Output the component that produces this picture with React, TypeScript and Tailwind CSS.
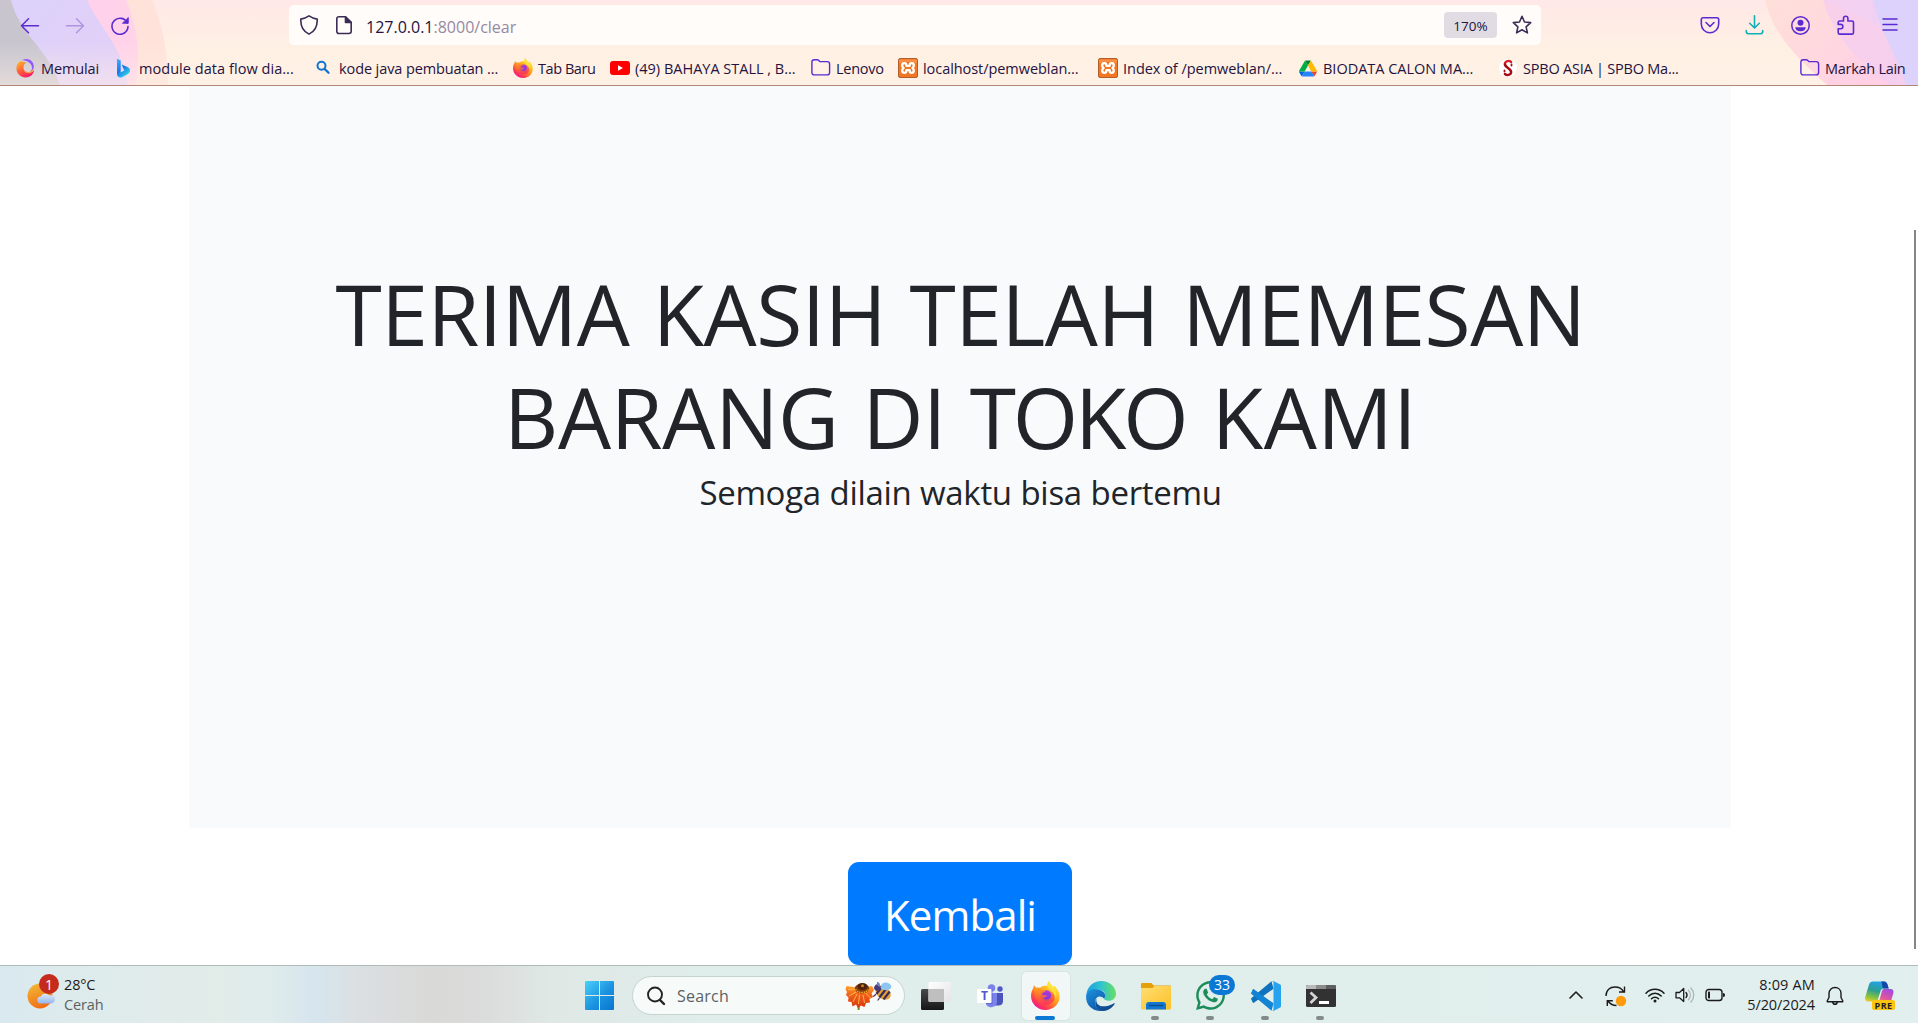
import React from 'react'
import type { ReactNode } from 'react'
import { FaWhatsapp } from 'react-icons/fa'

function FirefoxLogo({ id, className }: { id: string; className: string }) {
  return (
    <svg viewBox="0 0 28 28" className={className}>
      <defs>
        <linearGradient id={id + 'a'} x1="0.85" y1="0.05" x2="0.2" y2="0.95">
          <stop offset="0" stopColor="#fff44f" />
          <stop offset="0.3" stopColor="#ffc128" />
          <stop offset="0.55" stopColor="#ff8a1f" />
          <stop offset="0.8" stopColor="#ff3d4f" />
          <stop offset="1" stopColor="#f0129a" />
        </linearGradient>
        <linearGradient id={id + 'b'} x1="0.8" y1="0" x2="0.3" y2="1">
          <stop offset="0" stopColor="#b833e1" />
          <stop offset="1" stopColor="#6a3be0" />
        </linearGradient>
        <linearGradient id={id + 'c'} x1="0.3" y1="0" x2="0.5" y2="1">
          <stop offset="0" stopColor="#ff9a22" />
          <stop offset="0.5" stopColor="#ff6a30" />
          <stop offset="1" stopColor="#ff2f62" />
        </linearGradient>
      </defs>
      <path
        d="M17.5 0c.5 2.6 2.3 4.200 4.200 6.300.3-.7.4-1.300.3-2 3.300 2.500 5.700 6.500 5.700 11C27.700 22.300 21.600 28 14 28 6.200 28 0 22 0 14.500 0 10.800 1.200 8.600 2.300 6.800c.1-1 .2-1.800.6-2.600.6 1 1.300 1.700 2.200 2.200 1.200-.3 2.400-.2 3.700.2C10 5.200 11.300 4.600 13 4.500c1-.1 2 0 2.900.3-.2-1.700.2-3.400 1.600-4.800z"
        fill={`url(#${id}a)`}
      />
      <circle cx="14.700" cy="14.600" r="5.600" fill={`url(#${id}b)`} />
      <path
        d="M3 7.500c2.500-1.200 5-.6 6.700 1l4.800.9c-.4 1.200-2 1.700-3.300 2.100-.5.800-.3 1.500.2 2.200 1.800-.8 3.600.2 4.800.9-1.500.2-2.400 1.900-4.700 1.700 1.800 2.300 5.700 2.200 7.400-.3 1.300-2.200.5-4.700-1.300-6 4 .5 6 4.200 4.900 7.700-1.200 4-5.200 6-9.400 5.200C7.700 22 4 17.800 3.700 12.500z"
        fill={`url(#${id}c)`}
        fillOpacity="0.85"
      />
      <path d="M17.500 0c.5 2.600 2.300 4.200 4.200 6.300 2.600 3 3.400 7 2 10.600-.6-5.600-5-8-7.400-11.100C15.300 4 15.800 1.700 17.500 0z" fill="#ffe13a" />
    </svg>
  )
}

function MemulaiLogo() {
  return (
    <svg viewBox="0 0 20 20" className="size-[20px]">
      <defs>
        <linearGradient id="mem" x1="0.1" y1="0.1" x2="0.7" y2="1">
          <stop offset="0" stopColor="#ffb02e" />
          <stop offset="0.5" stopColor="#ff5a3c" />
          <stop offset="1" stopColor="#f5156c" />
        </linearGradient>
      </defs>
      <path d="M4.500 3C1.500 4.800.2 7.500.4 11c.4 5 4.500 8.600 9.300 8.500 4.800-.1 8.300-3.600 8.300-7.500-1.300 2.200-3.800 3.200-6.300 2.500C8.300 13.600 7 11 7.500 8.500 7.800 6.600 9 5.200 10.500 4.500 8.500 4 6 4 4.500 3z" fill="url(#mem)" />
      <path d="M6 2.200C11-.7 17.500 2 17.800 8.500c.1 2.500-1.500 5-4 5.200 2.300-1.200 2.700-4 1.700-6.200C14 4 10 2.200 6 2.200z" fill="#9059ff" />
      <path d="M17.900 9c.3 4.200-3 6.800-6.200 6.300-2.300-.3-4-1.800-4.400-4 1.300 2 3.500 3 5.700 2.600 2.500-.4 4.300-2.300 4.900-4.900z" fill="#ff9b45" />
    </svg>
  )
}

function BingLogo() {
  return (
    <svg viewBox="0 0 20 20" className="size-[20px]">
      <defs>
        <linearGradient id="bing" x1="0" y1="0" x2="0.6" y2="1">
          <stop offset="0" stopColor="#35b6ff" />
          <stop offset="0.55" stopColor="#1b78e8" />
          <stop offset="1" stopColor="#2cd6e8" />
        </linearGradient>
      </defs>
      <path d="M3 .8l3.700 1.600v12.200l3.600-2L8.500 8.800 7.800 6.500l5.700 2.600c1.700.8 2.500 2 2.500 3.600 0 1.400-.8 2.500-2 3.200L8 19.200c-2.600 1-5-.5-5-3.200z" fill="url(#bing)" />
    </svg>
  )
}

const SearchMark = () => (
  <svg viewBox="0 0 20 20" className="size-[20px]" fill="none" stroke="#1273cf" strokeLinecap="round">
    <circle cx="7.500" cy="7.800" r="4" strokeWidth="2" />
    <path d="M10.700 11l3.800 3.800" strokeWidth="2.300" />
  </svg>
)

const YoutubeLogo = () => (
  <svg viewBox="0 0 20 20" className="size-[20px]">
    <rect x="0" y="3" width="20" height="14" rx="3" fill="#f00" />
    <path d="M8 7.200l5 2.800-5 2.800z" fill="#fff" />
  </svg>
)

const FolderOutline = () => (
  <svg viewBox="0 0 20 20" className="size-[20px]" fill="none" stroke="#5b2bd2" strokeWidth="1.400" strokeLinejoin="round">
    <path d="M.9 4.200c0-1.400.9-2.400 2.300-2.400h3c.7 0 1.200.3 1.600.7l1 1.100h7.400c1.400 0 2.400 1 2.400 2.300v8.600c0 1.400-1 2.400-2.400 2.400h-13C1.800 16.900.9 15.900.9 14.500z" />
  </svg>
)

const XamppLogo = () => (
  <svg viewBox="0 0 20 20" className="size-[20px]">
    <rect x="0.500" y="0.500" width="19" height="19" rx="1.500" fill="#f37623" stroke="#b0602c" />
    <path d="M1 1.500h18V5C13 3.500 7 3.500 1 5z" fill="#ffa25c" fillOpacity="0.55" />
    <path
      d="M8.300 7c0-1.200-.8-1.800-2-1.800-1.300 0-2.100.8-2.100 2.200 0 1.200.5 1.900 1.400 2.600-1 .7-1.400 1.500-1.400 2.600 0 1.400.8 2.200 2.100 2.200 1.200 0 2-.6 2-1.800v-.8h3.400v.8c0 1.200.8 1.800 2 1.800 1.300 0 2.100-.8 2.100-2.200 0-1.100-.4-1.900-1.400-2.600 1-.7 1.400-1.400 1.400-2.600 0-1.400-.8-2.200-2.100-2.200-1.200 0-2 .6-2 1.800v.8H8.300z"
      fill="none"
      stroke="#fff"
      strokeWidth="2.300"
      strokeLinejoin="round"
    />
  </svg>
)

const DriveLogo = () => (
  <svg viewBox="0 0 87.3 78" className="h-[17px] w-[18px]">
    <path d="M6.600 66.850l3.850 6.650c.8 1.400 1.950 2.500 3.300 3.300l13.750-23.800H0c0 1.550.4 3.100 1.200 4.500z" fill="#0066da" />
    <path d="M43.650 25L29.900 1.200c-1.350.8-2.500 1.900-3.300 3.300l-25.400 44a9.060 9.060 0 00-1.200 4.500h27.500z" fill="#00ac47" />
    <path d="M73.550 76.800c1.350-.8 2.500-1.900 3.300-3.300l1.600-2.750 7.650-13.250c.8-1.400 1.200-2.950 1.200-4.500H59.800l5.850 11.500z" fill="#ea4335" />
    <path d="M43.650 25L57.400 1.200C56.050.4 54.500 0 52.900 0H34.400c-1.600 0-3.150.45-4.500 1.200z" fill="#00832d" />
    <path d="M59.800 53H27.500L13.750 76.800c1.350.8 2.900 1.200 4.500 1.200h50.800c1.600 0 3.150-.45 4.500-1.200z" fill="#2684fc" />
    <path d="M73.400 26.500l-12.700-22c-.8-1.400-1.950-2.500-3.300-3.300L43.650 25 59.800 53h27.450c0-1.550-.4-3.100-1.200-4.500z" fill="#ffba00" />
  </svg>
)

const SpboLogo = () => (
  <svg viewBox="0 0 20 20" className="size-[20px]">
    <circle cx="10" cy="10" r="9" fill="#fff" />
    <g fill="none" strokeLinecap="round" strokeWidth="2.300">
      <path d="M13.200 4C10 1.500 6 4 7 7c.8 2.200 5.500 3.500 6 6.500" stroke="#d4202a" />
      <path d="M6.800 16c3.200 2.500 7.200 0 6.200-3-.8-2.200-5.500-3.500-6-6.500" stroke="#a50d14" />
      <path d="M6.500 12.500v1M13.500 6.500v1" stroke="#a50d14" strokeWidth="1.800" />
    </g>
  </svg>
)

type Mark = { icon: ReactNode; text: string; box: string; track: string }

const bookmarks: Mark[] = [
  { icon: <MemulaiLogo />, text: 'Memulai', box: 'w-[98px]', track: 'tracking-[-0.12px]' },
  { icon: <BingLogo />, text: 'module data flow dia...', box: 'w-[200px]', track: 'tracking-[0.05px]' },
  { icon: <SearchMark />, text: 'kode java pembuatan ...', box: 'w-[199px]', track: 'tracking-[-0.1px]' },
  { icon: <FirefoxLogo id="fs" className="size-[20px]" />, text: 'Tab Baru', box: 'w-[97px]', track: 'tracking-[-0.45px]' },
  { icon: <YoutubeLogo />, text: '(49) BAHAYA STALL , B...', box: 'w-[201px]', track: 'tracking-[0px]' },
  { icon: <FolderOutline />, text: 'Lenovo', box: 'w-[87px]', track: 'tracking-[-0.25px]' },
  { icon: <XamppLogo />, text: 'localhost/pemweblan...', box: 'w-[200px]', track: 'tracking-[-0.06px]' },
  { icon: <XamppLogo />, text: 'Index of /pemweblan/...', box: 'w-[200px]', track: 'tracking-[-0.03px]' },
  { icon: <DriveLogo />, text: 'BIODATA CALON MA...', box: 'w-[200px]', track: 'tracking-[-0.02px]' },
  { icon: <SpboLogo />, text: 'SPBO ASIA | SPBO Ma...', box: 'w-[200px]', track: 'tracking-[-0.22px]' },
]

function Bookmark({ icon, text, box, track }: Mark) {
  return (
    <div className={`flex shrink-0 items-center gap-[5px] ${box}`}>
      <span className="flex size-[20px] shrink-0 items-center justify-center">{icon}</span>
      <span className={`whitespace-pre pt-px text-[14.5px] leading-5 ${track}`}>{text}</span>
    </div>
  )
}

function ThemeArt() {
  return (
    <svg viewBox="0 0 1918 85" className="absolute inset-0 h-[85px] w-full" preserveAspectRatio="none">
      <defs>
        <linearGradient id="peach" x1="0" y1="0" x2="0" y2="1">
          <stop offset="0" stopColor="#ffe8e7" />
          <stop offset="0.55" stopColor="#fff0e4" />
          <stop offset="1" stopColor="#fff1e5" />
        </linearGradient>
        <linearGradient id="lav" x1="0" y1="0" x2="1" y2="0.5">
          <stop offset="0" stopColor="#dcd3fa" />
          <stop offset="1" stopColor="#e2cff8" />
        </linearGradient>
        <linearGradient id="pinkL" x1="0" y1="0" x2="1" y2="0">
          <stop offset="0" stopColor="#ffccf3" />
          <stop offset="1" stopColor="#ffd3e8" />
        </linearGradient>
        <linearGradient id="pinkR" x1="0" y1="0" x2="1" y2="0.4">
          <stop offset="0" stopColor="#ffe0d8" />
          <stop offset="1" stopColor="#ffd0e6" />
        </linearGradient>
        <linearGradient id="violR" x1="0" y1="0" x2="1" y2="0.3">
          <stop offset="0" stopColor="#f6d1ee" />
          <stop offset="1" stopColor="#ecd0f6" />
        </linearGradient>
        <linearGradient id="fade" x1="0" y1="0" x2="0" y2="1">
          <stop offset="0.5" stopColor="#fff1e5" stopOpacity="0" />
          <stop offset="1" stopColor="#fff1e5" stopOpacity="0.5" />
        </linearGradient>
      </defs>
      <rect width="1918" height="85" fill="url(#peach)" />
      <path d="M0 0H152C163 25 168 55 168 85H0z" fill="#ffe3da" />
      <path d="M0 0H126C137 25 141 58 136 85H0z" fill="url(#pinkL)" />
      <path d="M0 0H87C99 27 122 45 128 85H0z" fill="url(#lav)" />
      <path d="M0 0H11C18 32 50 52 60 85H0z" fill="#c8c5cf" />
      <rect width="180" height="85" fill="url(#fade)" />
      <path d="M1765 0C1773 36 1800 60 1827 85H1918V0z" fill="url(#pinkR)" />
      <path d="M1823 0C1835 40 1862 65 1890 85H1918V0z" fill="url(#violR)" />
      <path d="M1873 0C1880 30 1897 58 1906 85H1918V0z" fill="#ddd2fb" />
      <path d="M1823 0C1832 24 1843 38 1856 54 1840 60 1830 70 1827 85H1906C1901 68 1888 40 1880 26z" fill="#ffcfe4" fillOpacity="0.45" />
    </svg>
  )
}

const ink = 'size-[20px] shrink-0'

function Browser() {
  return (
    <header className="relative h-[86px] shrink-0 overflow-hidden border-b border-[#b08774] text-[#24123f]">
      <ThemeArt />
      <div className="relative flex h-[50px] items-center">
        <div className="flex w-[289px] items-center gap-[25px] pl-5">
          <svg viewBox="0 0 20 20" className={ink} fill="none" stroke="#5b2bd2" strokeWidth="1.500" strokeLinecap="round" strokeLinejoin="round">
            <path d="M18.500 10.700H1.500M8.500 3.700l-7 7 7 7" />
          </svg>
          <svg viewBox="0 0 20 20" className={ink} fill="none" stroke="#b193e0" strokeWidth="1.500" strokeLinecap="round" strokeLinejoin="round">
            <path d="M1.500 10.700h17M11.500 3.700l7 7-7 7" />
          </svg>
          <svg viewBox="0 0 20 20" className={ink} fill="none" stroke="#5b2bd2" strokeWidth="1.600" strokeLinecap="round">
            <path d="M17.300 8A8 8 0 1018 11.500" />
            <path d="M18.300 2.800v5.500h-5.600z" fill="#5b2bd2" strokeWidth="0.800" strokeLinejoin="round" />
          </svg>
        </div>
        <div className="flex h-10 w-[1252px] items-center rounded-[5px] bg-[#fffcfa] pl-[10px] pr-[9px]">
          <svg viewBox="0 0 20 20" className={ink} fill="none" stroke="#3c2c55" strokeWidth="1.600" strokeLinejoin="round">
            <path d="M10 .9c2.500 1.700 5 2.700 8.200 3.200.3 7-2.200 12.200-8.200 15C4 16.300 1.500 11.100 1.800 4.100 5 3.600 7.500 2.600 10 .9z" />
          </svg>
          <svg viewBox="0 0 20 20" className="ml-[15px] size-[20px] shrink-0" fill="none" stroke="#3c2c55" strokeWidth="1.600" strokeLinejoin="round">
            <path d="M5 1.800h6.500l5.700 5.500v9c0 1.200-.8 2.200-2.200 2.200H5c-1.400 0-2.200-1-2.200-2.200V4c0-1.300.9-2.200 2.200-2.200z" />
            <path d="M11.500 2v5.400H17z" fill="#3c2c55" />
          </svg>
          <span className="ml-[12px] flex-1 pt-[3px] text-base leading-6 text-[#958aa3]">
            <span className="text-[#24123f]">127.0.0.1</span>:8000/clear
          </span>
          <span className="flex h-[26px] w-[53px] items-center justify-center rounded-[4px] bg-[#e1dce3] pt-[2px] text-[13.5px] tracking-[0.1px]">170%</span>
          <svg viewBox="0 0 20 20" className="ml-[15px] size-[20px] shrink-0" fill="none" stroke="#3c2c55" strokeWidth="1.600" strokeLinejoin="round">
            <path d="M10 1.300l2.500 5.700 6.200.6-4.600 4.200 1.300 6.100L10 14.800l-5.400 3.100 1.300-6.100L1.300 7.600l6.200-.6z" />
          </svg>
        </div>
        <div className="ml-[159px] flex items-center gap-[25px]">
          <svg viewBox="0 0 20 20" className={ink} fill="none" stroke="#5b2bd2" strokeWidth="1.600" strokeLinecap="round" strokeLinejoin="round">
            <path d="M3 2.800h14c1 0 1.700.7 1.700 1.700v4.500c0 5-4 8.700-8.700 8.700S1.300 14 1.300 9V4.500c0-1 .7-1.700 1.700-1.700z" />
            <path d="M6 7.500l4 4 4-4" />
          </svg>
          <svg viewBox="0 0 20 20" className={ink} fill="none" stroke="#10aeb5" strokeWidth="1.600" strokeLinecap="round" strokeLinejoin="round">
            <path d="M9.500.8v12M4.700 8.300L9.500 13l4.800-4.700M1.300 15.500v1c0 1.300.8 2.200 2.200 2.200h12c1.400 0 2.200-.9 2.200-2.200v-1" />
          </svg>
          <svg viewBox="0 0 20 20" className={ink} fill="none" stroke="#5b2bd2" strokeWidth="1.500">
            <circle cx="10.500" cy="10.500" r="8.700" />
            <circle cx="10.500" cy="7.800" r="3" fill="#5b2bd2" stroke="none" />
            <path d="M5.300 12.300h10.400c0 2.500-2.200 4-5.200 4s-5.200-1.500-5.200-4z" fill="#5b2bd2" stroke="none" />
          </svg>
          <svg viewBox="0 0 20 20" className={ink} fill="none" stroke="#5b2bd2" strokeWidth="1.600" strokeLinejoin="round">
            <path d="M8.500 6V3.500a2.200 2.200 0 014.400 0V6h4c.9 0 1.600.7 1.600 1.600v9.800c0 1-.7 1.700-1.600 1.700H4.800c-.9 0-1.600-.7-1.600-1.700v-3.600h2.500a2.200 2.200 0 000-4.400H3.200V7.600C3.200 6.700 3.900 6 4.800 6z" />
          </svg>
          <svg viewBox="0 0 20 20" className={ink} stroke="#5b2bd2" strokeWidth="1.500" strokeLinecap="round">
            <path d="M3 4h14M3 9.500h14M3 15h14" />
          </svg>
        </div>
      </div>
      <nav className="relative flex h-9 items-center pl-4">
        {bookmarks.map((b) => (
          <Bookmark key={b.text} {...b} />
        ))}
        <div className="ml-auto flex w-[118px]">
          <Bookmark icon={<FolderOutline />} text="Markah Lain" box="w-[118px]" track="tracking-[-0.28px]" />
        </div>
      </nav>
    </header>
  )
}

function Page() {
  return (
    <main className="relative flex h-[879px] flex-col items-center overflow-hidden bg-white pl-[2px] text-[#212529]">
      <section className="flex h-[742px] w-[1542px] shrink-0 flex-col items-center bg-[#f8fafc] pl-px pt-[176px] text-center">
        <h1 className="whitespace-nowrap text-[84px] leading-[103px]">
          <span className="block tracking-[-0.5px] [word-spacing:2px]">TERIMA KASIH TELAH MEMESAN</span>
          <span className="block tracking-[-0.3px] [word-spacing:2px]">
            BARANG DI <span className="mr-[3px] tracking-[-3.2px]">TOKO</span> <span className="tracking-[0.4px]">KAMI</span>
          </span>
        </h1>
        <p className="mt-[5px] text-[33px] leading-10 tracking-[-0.32px] [word-spacing:0.5px]">Semoga dilain waktu bisa bertemu</p>
      </section>
      <button className="mt-[34px] flex h-[103px] w-[224px] shrink-0 items-center justify-center rounded-[11px] bg-[#007bff] pt-[3px] text-[42px] leading-none tracking-[-0.9px] text-white">
        Kembali
      </button>
      <div className="absolute right-[2px] top-[144px] h-[719px] w-[2px] bg-[#858585]" />
    </main>
  )
}

function Slot({ children, open }: { children: ReactNode; open?: boolean }) {
  return (
    <div className="relative flex h-12 w-[55px] items-center justify-center">
      {children}
      {open && <span className="absolute bottom-0 left-[23px] h-1 w-2 rounded-full bg-[#838b8b]" />}
    </div>
  )
}

function WeatherIcon() {
  return (
    <div className="relative mb-[3px] h-[38px] w-[32px]">
      <svg viewBox="0 0 32 38" className="h-[38px] w-[32px]">
        <defs>
          <linearGradient id="sun" x1="0.2" y1="0" x2="0.6" y2="1">
            <stop offset="0" stopColor="#f2b936" />
            <stop offset="1" stopColor="#f26a13" />
          </linearGradient>
          <linearGradient id="cloud" x1="0" y1="0" x2="0" y2="1">
            <stop offset="0" stopColor="#dfeafd" />
            <stop offset="1" stopColor="#95b6ee" />
          </linearGradient>
        </defs>
        <circle cx="13" cy="22" r="12.500" fill="url(#sun)" />
        <path d="M14 29.500a3.500 3.500 0 01-.3-7c1-3 6-4 8.500-1.200 3.300-.7 6 .8 5.800 3.700-.1 2.800-2 4.500-4.500 4.500z" fill="url(#cloud)" />
      </svg>
      <span className="absolute left-[12px] top-0 flex size-5 items-center justify-center rounded-full bg-[#c42b1c] text-[14px] text-white">1</span>
    </div>
  )
}

const StartLogo = () => (
  <svg viewBox="0 0 29 29" className="size-[29px]">
    <defs>
      <linearGradient id="win" x1="0" y1="0" x2="1" y2="1">
        <stop offset="0" stopColor="#4bd0fb" />
        <stop offset="0.55" stopColor="#1b93e0" />
        <stop offset="1" stopColor="#0a74d0" />
      </linearGradient>
    </defs>
    <path d="M1 0h13v14H0V1a1 1 0 011-1zM15 0h13a1 1 0 011 1v13H15zM0 15h14v14H1a1 1 0 01-1-1zM15 15h14v13a1 1 0 01-1 1H15z" fill="url(#win)" />
  </svg>
)

const FlowerAndBee = () => (
  <svg viewBox="0 0 47 30" className="h-[30px] w-[47px]">
    <defs>
      <linearGradient id="petal" x1="0.5" y1="0" x2="0.5" y2="1">
        <stop offset="0" stopColor="#ffa42c" />
        <stop offset="0.4" stopColor="#f0601b" />
        <stop offset="1" stopColor="#d8350f" />
      </linearGradient>
    </defs>
    <path d="M12.500 24h2.500l-.5 5h-1.800z" fill="#6f8f21" />
    <path d="M15 7L1.500 5l-1 3.500L2 11l-1 3 2.500 2.500-.5 4 3.500.5 1 4.500 3.500-2 2 3.500 3-2.500 3.500 1.500 1.500-4 4-.5-.5-3.500 3.500-2-1.500-3.500L29 9l-2-4z" fill="url(#petal)" />
    <path d="M11 11L4 15M12 13l-4 8M14.500 14l-1 9M18 14l1.500 8M20.500 12l5 5M11 8L3 8.500" stroke="#ffc04a" strokeWidth="0.900" />
    <ellipse cx="17" cy="7.500" rx="7.200" ry="5" fill="#8a3d0b" />
    <ellipse cx="17.500" cy="5.500" rx="5" ry="3.500" fill="#4c220a" />
    <circle cx="17.500" cy="4.800" r="1.500" fill="#c88128" />
    <path d="M10.500 8.500l3 2.500 3.500.5 3.500-.5 3-2.500" stroke="#f7b733" strokeWidth="1.300" strokeDasharray="1.300 1" fill="none" />
    <g transform="rotate(38 38 11)">
      <ellipse cx="38.500" cy="11.500" rx="8.500" ry="6" fill="#e6a13d" />
      <path d="M34 6.500v10M38.500 5.500v12M43 6.500v10" stroke="#3c2d55" strokeWidth="2.300" />
      <circle cx="31" cy="11" r="3.300" fill="#4b3a78" />
      <path d="M34 17l-1 3.500M39 18v3" stroke="#3c2d55" strokeWidth="1.200" />
    </g>
    <path d="M36 8c-1-4 2-7 5-6.500C45 2 47 4.500 46 7c-2 3-7 2.500-10 1z" fill="#8cc5f2" />
    <path d="M34.500 6c-2-1-3-3-2.500-5 2 0 4 2 2.500 5z" fill="#6d86c8" />
  </svg>
)

const TaskView = () => (
  <svg viewBox="0 0 30 30" className="size-[30px]">
    <defs>
      <linearGradient id="tv" x1="0" y1="0" x2="0" y2="1">
        <stop offset="0" stopColor="#494949" />
        <stop offset="1" stopColor="#161616" />
      </linearGradient>
      <linearGradient id="tw" x1="0" y1="0" x2="1" y2="1">
        <stop offset="0" stopColor="#ffffff" />
        <stop offset="1" stopColor="#e3e3e5" />
      </linearGradient>
    </defs>
    <rect x="0" y="8" width="23" height="21" rx="1.500" fill="url(#tv)" />
    <rect x="7.500" y="1" width="22.500" height="20" rx="1.500" fill="url(#tw)" />
    <path d="M7.500 8H23v13H9a1.500 1.500 0 01-1.500-1.500z" fill="#bfbfbf" />
  </svg>
)

const TeamsLogo = () => (
  <div className="relative h-6 w-[27px]">
    <svg viewBox="0 0 27 24" className="h-6 w-[27px]">
      <circle cx="14.500" cy="4" r="3.800" fill="#7b83eb" />
      <circle cx="23" cy="5" r="2.700" fill="#5059c9" />
      <path d="M17 9h9v8.500c0 2.500-2 4-4.500 4H17z" fill="#4b53bc" />
      <path d="M9 9h11v8.500a5.800 5.800 0 01-11 2.500z" fill="#7b83eb" />
      <path d="M14 5h1.500v15H9v-1h5z" fill="#5059c9" fillOpacity="0.6" />
      <rect x="0" y="5" width="14.500" height="14" rx="0.700" fill="#fff" />
    </svg>
    <span className="absolute left-[3.500px] top-[5px] w-[8px] text-center text-[12px] font-bold leading-[14px] text-[#5059c9]">T</span>
  </div>
)

const EdgeLogo = () => (
  <svg viewBox="0 0 30 30" className="size-[30px]">
    <defs>
      <linearGradient id="ea" x1="0" y1="0.3" x2="1" y2="0.3">
        <stop offset="0" stopColor="#1f9fe0" />
        <stop offset="0.5" stopColor="#2fc4cf" />
        <stop offset="1" stopColor="#69e05e" />
      </linearGradient>
      <linearGradient id="eb" x1="0" y1="0" x2="0.6" y2="1">
        <stop offset="0" stopColor="#1b93dd" />
        <stop offset="1" stopColor="#0f58ab" />
      </linearGradient>
      <linearGradient id="ec" x1="0" y1="0" x2="1" y2="0.6">
        <stop offset="0" stopColor="#0c59a4" />
        <stop offset="1" stopColor="#114a8b" />
      </linearGradient>
    </defs>
    <path d="M.3 13.500C1.500 5 8 0 15 0c8.500 0 15 6 15 12.700 0 4.300-3.300 7-7 7-2.800 0-5-.8-5-2.200 0-.7 1.200-1.300 1.200-3.300 0-3-3-5.400-7-5.400C6.500 8.800 1.500 10.500.3 13.500z" fill="url(#ea)" />
    <path d="M.2 14C1.500 9.500 6.500 7.500 11.700 8.500c4.500.8 7.500 3 7.500 6 0 1.500-.6 2.200-1.200 3-1.500-1.500-3-2.300-5-2-3 .6-4.500 4-3.800 7.500.6 3.500 3 6 6.300 7C6 30.500-1 23.500.2 14z" fill="url(#eb)" />
    <path d="M10.500 17c-1.500 7 5 11.800 17.600 5.200.5-.2.900.3.600.8C26 27.300 21 30.500 15.500 30 10 29 7.500 22.500 10.500 17z" fill="url(#ec)" />
  </svg>
)

const ExplorerLogo = () => (
  <svg viewBox="0 0 30 28" className="h-[28px] w-[30px]">
    <defs>
      <linearGradient id="fo" x1="0" y1="0" x2="1" y2="1">
        <stop offset="0" stopColor="#ffdd72" />
        <stop offset="1" stopColor="#fcc127" />
      </linearGradient>
    </defs>
    <path d="M0 2a1 1 0 011-1h9.500l2 2.500H29a1 1 0 011 1V9H0z" fill="#e3a008" />
    <path d="M0 6h11.500l2-2H30v22.500a1 1 0 01-1 1H1a1 1 0 01-1-1z" fill="url(#fo)" />
    <path d="M5 27.500V23a3 3 0 013-3h14a3 3 0 013 3v4.500z" fill="#1277d0" />
    <path d="M8.500 23.500h13" stroke="#0a4e92" strokeWidth="1.300" strokeLinecap="round" />
  </svg>
)

const VSCodeLogo = () => (
  <svg viewBox="0 0 30 30" className="size-[30px]">
    <path d="M.5 18.800a1.200 1.200 0 010-1.800L20.500.2l2 7.500L3.200 21.600c-.5.400-1 .4-1.500 0z" fill="#0f72bd" />
    <path d="M.5 11.200a1.200 1.200 0 000 1.800l20 16.800 2-7.500L3.200 8.400c-.5-.4-1-.4-1.500 0z" fill="#1284d3" />
    <path d="M20.500 29.500c.9.500 1.500.5 2.300.2l6-2.900c.7-.3 1.200-1 1.200-1.700V4.900c0-.7-.5-1.400-1.200-1.700l-6-2.900c-.9-.4-1.800-.2-2.300.2 1-.6 2 .1 2 1.300v26.400c0 1.300-1 1.900-2 1.300z" fill="#27a2ee" />
  </svg>
)

const TerminalLogo = () => (
  <svg viewBox="0 0 30 22" className="h-[22px] w-[30px]">
    <rect width="30" height="22" rx="1.500" fill="#323232" />
    <path d="M1.500 0H10v4H0V1.500A1.500 1.500 0 011.500 0z" fill="#b9b9b9" />
    <path d="M10 0h10v4H10z" fill="#8c8c8c" />
    <path d="M20 0h8.500A1.500 1.500 0 0130 1.500V4H20z" fill="#5f5f5f" />
    <path d="M4.500 7.500l5.500 5-5.500 5.500" fill="none" stroke="#d5d5d5" strokeWidth="2.800" />
    <path d="M13 16h10v3H13z" fill="#fff" />
  </svg>
)

const CopilotLogo = () => (
  <div className="relative h-[29px] w-[30px]">
    <svg viewBox="0 0 30 29" className="h-[29px] w-[30px]">
      <defs>
        <linearGradient id="ca" x1="0.5" y1="0" x2="0.2" y2="1">
          <stop offset="0" stopColor="#1fa3e8" />
          <stop offset="0.45" stopColor="#2f9e8f" />
          <stop offset="0.8" stopColor="#8cc63a" />
          <stop offset="1" stopColor="#f0c929" />
        </linearGradient>
        <linearGradient id="cb" x1="0.7" y1="0" x2="0.3" y2="1">
          <stop offset="0" stopColor="#a04be0" />
          <stop offset="0.5" stopColor="#e0559c" />
          <stop offset="1" stopColor="#ff9a55" />
        </linearGradient>
      </defs>
      <path d="M8 .5h11c2 0 3 1.500 3.500 3l1.200 4H19c-2 0-3 1-3.600 3L13 18c-.5 1.500-1.500 2.500-3 2.500H3c-2.500 0-3.500-2-2.700-4.500L4 3.500C4.600 1.500 6 .5 8 .5z" fill="url(#ca)" />
      <path d="M16 .5h3c2 0 3 1.500 3.500 3l1.200 4H19c-1.500 0-1.500-2-2-4S17 1.500 16 .5z" fill="#1746a8" />
      <path d="M18.500 8h7c2.500 0 3.500 2 2.800 4.500l-3 10c-.6 2-2 3-4 3H12c-2 0-2.500-1.500-2-3 2.500 0 3.600-1 4.300-3l2.500-9c.3-1.300.9-2 1.700-2.500z" fill="url(#cb)" />
    </svg>
    <span className="absolute left-[7px] top-[19px] flex h-[10px] w-[23px] items-center justify-center rounded-[2px] bg-[#fdc30f] text-[9px] font-bold leading-none tracking-[0.4px] text-[#222]">PRE</span>
  </div>
)

function Taskbar() {
  return (
    <footer className="relative flex h-[58px] shrink-0 items-center border-t border-[#aebbb6] bg-[linear-gradient(90deg,#d9e9f0_0px,#deebec_80px,#e2ece9_220px,#dfecec_270px,#d6e5ee_315px,#dbdfe1_360px,#d9d9d8_430px,#dadbda_480px,#dfe8e5_550px,#dfedeb_700px,#e0eeec_1400px,#e1efee_1918px)] text-[#1b1b1b]">
      <div className="flex w-[585px] shrink-0 items-center pl-[27px]">
        <WeatherIcon />
        <div className="ml-[5px] text-[14.5px] leading-5 tracking-[-0.15px]">
          <div>28°C</div>
          <div className="text-[#5a6262]">Cerah</div>
        </div>
      </div>
      <div className="pt-[2px]"><StartLogo /></div>
      <div className="ml-[18px] mt-[2px] flex h-[39px] w-[273px] shrink-0 items-center rounded-full border border-[#c7d3d1] bg-[#f6faf9] pl-[13px] pr-[12px]">
        <svg viewBox="0 0 20 20" className="size-[20px]" fill="none" stroke="#222" strokeLinecap="round">
          <circle cx="9" cy="8.500" r="7" strokeWidth="1.900" />
          <path d="M14 14l4 4" strokeWidth="2.400" />
        </svg>
        <span className="ml-[11px] flex-1 text-base tracking-[0.23px] text-[#5d6262]">Search</span>
        <FlowerAndBee />
      </div>
      <div className="ml-[3px] flex pt-[2px]">
        <Slot><TaskView /></Slot>
        <Slot><TeamsLogo /></Slot>
        <div className="relative flex h-12 w-[55px] items-center justify-center">
          <div className="flex size-12 items-center justify-center rounded-[5px] bg-[#f1f7f7] shadow-[0_0_1px_1px_#d9e4e3]">
            <FirefoxLogo id="fb" className="size-[29px]" />
          </div>
          <span className="absolute bottom-0 left-[17px] h-1 w-5 rounded-full bg-[#0a78d4]" />
        </div>
        <Slot><EdgeLogo /></Slot>
        <Slot open><ExplorerLogo /></Slot>
        <Slot open>
          <FaWhatsapp className="size-[33px] text-[#1c8c5a]" />
          <span className="absolute left-[26px] top-[3px] flex h-5 w-[26px] items-center justify-center rounded-full bg-[#0a78d4] text-[14px] text-white">33</span>
        </Slot>
        <Slot open><VSCodeLogo /></Slot>
        <Slot open><TerminalLogo /></Slot>
      </div>
      <div className="ml-auto flex h-full items-center pr-[23px]">
        <svg viewBox="0 0 16 16" className="size-4" fill="none" stroke="#1b1b1b" strokeWidth="1.600" strokeLinecap="round" strokeLinejoin="round">
          <path d="M2 11l6-6 6 6" />
        </svg>
        <svg viewBox="0 0 22 22" className="ml-[21px] mt-[2px] size-[22px]" fill="none" stroke="#1b1b1b" strokeWidth="1.400">
          <path d="M1 11C1 5 5 2 10 2c4 0 7 1.800 8.800 4.800M19.500 1.500v5.500h-5.500M2.300 21v-5.300h5.500M2.500 15.500c2 3 5 5 9 5" />
          <circle cx="16" cy="16" r="5.200" fill="#ff9a0b" stroke="none" />
        </svg>
        <svg viewBox="0 0 20 16" className="ml-[18px] h-4 w-5" fill="none" stroke="#1b1b1b" strokeWidth="1.500" strokeLinecap="round">
          <path d="M1 6.200c5-5.300 13-5.300 18 0M3.800 9c3.500-3.700 8.900-3.700 12.400 0M6.500 11.800c2-2.100 5-2.100 7 0" />
          <circle cx="10" cy="14" r="1.500" fill="#1b1b1b" stroke="none" />
        </svg>
        <svg viewBox="0 0 20 18" className="ml-[10px] h-[18px] w-5" fill="none" stroke="#1b1b1b" strokeWidth="1.300" strokeLinecap="round" strokeLinejoin="round">
          <path d="M1 6.500h3.500L8.700 2.500v13L4.500 11.800H1zM11 6.500c1.300 1.500 1.300 3.500 0 5" />
          <path d="M13.500 4.200c2.400 2.800 2.400 6.800 0 9.600M16 2c3.600 4 3.600 10 0 14" stroke="#aab5b4" />
        </svg>
        <svg viewBox="0 0 20 14" className="ml-[10px] h-[14px] w-5" fill="none" stroke="#1b1b1b" strokeWidth="1.400">
          <rect x="1" y="1.500" width="16" height="11" rx="2.800" />
          <rect x="3" y="3.500" width="2" height="7" rx="0.800" fill="#1b1b1b" stroke="none" />
          <path d="M18 5v4c1.500 0 2-1 2-2s-.5-2-2-2z" fill="#1b1b1b" stroke="none" />
        </svg>
        <div className="ml-[21px] w-[69px] text-right text-[14.5px] leading-5">
          <div className="tracking-[0.15px]">8:09 AM</div>
          <div className="tracking-[-0.1px]">5/20/2024</div>
        </div>
        <svg viewBox="0 0 18 20" className="ml-[11px] mt-[2px] h-5 w-[18px]" fill="none" stroke="#1b1b1b" strokeWidth="1.400" strokeLinejoin="round">
          <path d="M9 1.500c3.500 0 6 2.500 6 6v4l1.800 3.500c.1.400-.1.700-.5.700H1.700c-.4 0-.6-.3-.5-.7L3 11.500v-4c0-3.500 2.500-6 6-6zM6.700 16c.3 1.600 1.200 2.300 2.300 2.300s2-.7 2.300-2.300" />
        </svg>
        <div className="ml-[21px] mt-[2px]"><CopilotLogo /></div>
      </div>
    </footer>
  )
}

export default function App() {
  return (
    <div className="flex h-[1023px] w-[1918px] flex-col overflow-hidden bg-white font-['Open_Sans','Noto_Sans',sans-serif]">
      <Browser />
      <Page />
      <Taskbar />
    </div>
  )
}
